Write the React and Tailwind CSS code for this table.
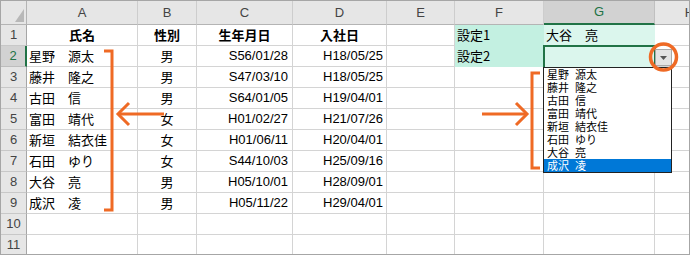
import React from "react";

const JP = "font-['Noto_Sans_CJK_JP',sans-serif]";
const LAT = "font-['Liberation_Sans','Noto_Sans_CJK_JP',sans-serif]";

const cols = ["A", "B", "C", "D", "E", "F", "G", "H"];

const data = [
  ["星野　源太", "男", "S56/01/28", "H18/05/25"],
  ["藤井　隆之", "男", "S47/03/10", "H18/05/25"],
  ["古田　信", "男", "S64/01/05", "H19/04/01"],
  ["富田　靖代", "女", "H01/02/27", "H21/07/26"],
  ["新垣　結衣佳", "女", "H01/06/11", "H20/04/01"],
  ["石田　ゆり", "女", "S44/10/03", "H25/09/16"],
  ["大谷　亮", "男", "H05/10/01", "H28/09/01"],
  ["成沢　凌", "男", "H05/11/22", "H29/04/01"],
];

const list = [
  ["星野", "源太"],
  ["藤井", "隆之"],
  ["古田", "信"],
  ["富田", "靖代"],
  ["新垣", "結衣佳"],
  ["石田", "ゆり"],
  ["大谷", "亮"],
  ["成沢", "凌"],
];

const cell = "border-r border-b border-[#d4d4d4] flex items-center overflow-hidden whitespace-nowrap text-[13px] text-black";

function RowHeader({ n }) {
  const sel = n === 2;
  return (
    <div
      className={
        "flex items-center justify-center border-b text-[13px] " +
        LAT +
        (sel
          ? " bg-[#d2d2d2] text-[#217346] border-b-[#bdbdbd] border-r-2 border-r-[#217346]"
          : " bg-[#e6e6e6] text-[#444] border-b-[#c8c8c8] border-r border-r-[#a6a6a6]")
      }
    >
      {n}
    </div>
  );
}

export default function App() {
  const rows = [];
  rows.push(
    <React.Fragment key="r1">
      <RowHeader n={1} />
      <div className={cell + " justify-center font-bold " + JP}>氏名</div>
      <div className={cell + " justify-center font-bold " + JP}>性別</div>
      <div className={cell + " justify-center font-bold " + JP}>生年月日</div>
      <div className={cell + " justify-center font-bold " + JP}>入社日</div>
      <div className={cell}></div>
      <div className={"flex items-center whitespace-nowrap text-[13px] text-black pl-[2px] bg-[#c3f0e1] border-r border-b border-[#c3f0e1] " + JP}>設定1</div>
      <div className={"flex items-center whitespace-nowrap text-[13px] text-black pl-[2px] bg-[#dbf6ed] border-r border-b border-[#dbf6ed] " + JP}>大谷　亮</div>
      <div className={cell}></div>
    </React.Fragment>
  );
  data.forEach((d, i) => {
    const n = i + 2;
    const isTwo = n === 2;
    rows.push(
      <React.Fragment key={"r" + n}>
        <RowHeader n={n} />
        <div className={cell + " pl-[2px] " + JP}>{d[0]}</div>
        <div className={cell + " justify-center " + JP}>{d[1]}</div>
        <div className={cell + " justify-end pr-[4px] text-[12.5px] " + LAT}>{d[2]}</div>
        <div className={cell + " justify-end pr-[3px] text-[12.5px] " + LAT}>{d[3]}</div>
        <div className={cell}></div>
        {isTwo ? (
          <div className={"flex items-center whitespace-nowrap text-[13px] text-black pl-[2px] bg-[#c3f0e1] border-r border-b border-[#c3f0e1] " + JP}>設定2</div>
        ) : (
          <div className={cell}></div>
        )}
        {isTwo ? (
          <div className="bg-[#dbf6ed] border-r border-b border-[#dbf6ed]"></div>
        ) : (
          <div className={cell}></div>
        )}
        <div className={cell}></div>
      </React.Fragment>
    );
  });
  [10, 11].forEach((n) => {
    rows.push(
      <React.Fragment key={"r" + n}>
        <RowHeader n={n} />
        {cols.map((c) => (
          <div key={c} className={cell}></div>
        ))}
      </React.Fragment>
    );
  });

  return (
    <div className="w-[690px] h-[255px] bg-white">
      <div className="relative w-[690px] h-[255px] overflow-hidden border border-[#a6a6a6] bg-white">
        <div className="grid w-[760px] grid-cols-[26px_111px_59px_96px_94px_68px_89px_111px_70px] grid-rows-[24px_repeat(11,21px)]">
          <div className="relative bg-[#e6e6e6] border-r border-b border-[#b4b4b4]">
            <svg className="absolute left-0 top-0" width="26" height="24" viewBox="0 0 26 24">
              <polygon points="14,21 23,21 23,8" fill="#b8b8b8" />
            </svg>
          </div>
          {cols.map((c) =>
            c === "G" ? (
              <div
                key={c}
                className={"flex items-center justify-center bg-[#d2d2d2] text-[#217346] text-[13px] border-r border-r-[#c0c0c0] border-b-2 border-b-[#217346] " + LAT}
              >
                {c}
              </div>
            ) : (
              <div
                key={c}
                className={"flex items-center justify-center bg-[#e6e6e6] text-[#444] text-[13px] border-r border-r-[#cdcdcd] border-b border-b-[#b4b4b4] " + LAT}
              >
                {c}
              </div>
            )
          )}
          {rows}
        </div>

        <div className="absolute left-[542px] top-[44px] w-[113px] h-[24px] border-2 border-[#217346]"></div>

        <div className="absolute left-[654px] top-[48px] w-[17px] h-[17px] bg-[#e3e3e3] border border-[#a9a9a9] flex items-center justify-center">
          <svg width="7" height="4" viewBox="0 0 7 4">
            <polygon points="0,0 7,0 3.5,4" fill="#555" />
          </svg>
        </div>

        <div className={"absolute left-[542px] top-[66px] w-[129px] bg-white border border-[#222] " + JP}>
          {list.map((it, i) => (
            <div
              key={i}
              className={
                "h-[13px] flex items-center pl-[3px] gap-[6px] text-[11px] leading-none whitespace-nowrap " +
                (i === list.length - 1 ? "bg-[#0078d7] text-white" : "text-black")
              }
            >
              <span>{it[0]}</span>
              <span>{it[1]}</span>
            </div>
          ))}
        </div>

        <svg className="absolute left-[-1px] top-[-1px] pointer-events-none" width="690" height="255" viewBox="0 0 690 255">
          <g fill="none" stroke="#ef6a25" strokeWidth="3">
            <path d="M104,51 H112 V210 H104" />
            <path d="M164,114 H119" />
            <path d="M129,103 L118,114 L129,125" />
            <path d="M540,73 H532 V168 H540" />
            <path d="M482,114 H527" />
            <path d="M516,103 L527,114 L516,125" />
            <circle cx="663.5" cy="57" r="13" strokeWidth="3.5" />
          </g>
        </svg>
      </div>
    </div>
  );
}
